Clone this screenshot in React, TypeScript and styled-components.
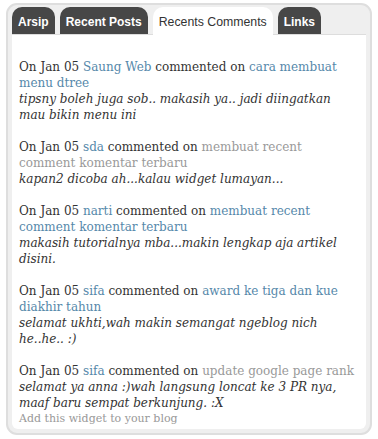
import styled, { createGlobalStyle } from 'styled-components';

const GlobalStyle = createGlobalStyle`
  html, body {
    margin: 0;
    padding: 0;
    background: #ffffff;
  }
`;

const Frame = styled.div`
  box-sizing: border-box;
  margin: 3px 0 0 6px;
  width: 366px;
  height: 432px;
  padding: 2px 4px 4px;
  display: flex;
  flex-direction: column;
  background: #efefef;
  border: 2px solid #dedede;
  border-radius: 11px;
`;

const TabRow = styled.div`
  display: flex;
  gap: 5px;
  align-items: flex-end;
`;

const Tab = styled.div<{ $active?: boolean }>`
  padding: 7px 6px 4px;
  line-height: 16px;
  font-family: "Liberation Sans", Arial, sans-serif;
  font-size: ${(p) => (p.$active ? '12.3px' : '12px')};
  font-weight: ${(p) => (p.$active ? 'normal' : 'bold')};
  color: ${(p) => (p.$active ? '#333333' : '#ffffff')};
  background: ${(p) => (p.$active ? '#ffffff' : '#474747')};
  border-radius: 10px 10px 0 0;
  white-space: nowrap;
  position: relative;
  z-index: ${(p) => (p.$active ? 1 : 0)};
  margin-bottom: ${(p) => (p.$active ? '-1px' : '0')};
  padding-bottom: ${(p) => (p.$active ? '5px' : '4px')};
`;

const Panel = styled.div`
  flex: 1;
  background: #ffffff;
  border-top: 1px solid #dddddd;
  border-radius: 0 0 6px 6px;
  padding: 24px 7px 0;
  font-family: "DejaVu Serif", Georgia, serif;
  font-size: 12px;
  line-height: 16px;
  color: #333333;
`;

const CommentList = styled.ul`
  list-style: none;
  margin: 0;
  padding: 0;
`;

const CommentItem = styled.li`
  margin-bottom: 16px;

  &:last-child {
    margin-bottom: 0;
  }
`;

const Link = styled.a<{ $visited?: boolean }>`
  color: ${(p) => (p.$visited ? '#999999' : '#5588aa')};
  text-decoration: none;
`;

const Body = styled.div`
  font-style: italic;
`;

const Footer = styled.a`
  display: block;
  font-size: 11px;
  color: #999999;
  text-decoration: none;
`;

interface CommentType {
  author: string;
  post: string;
  visited: boolean;
  text: string;
}

const comments: CommentType[] = [
  { author: 'Saung Web', post: 'cara membuat menu dtree', visited: false, text: 'tipsny boleh juga sob.. makasih ya.. jadi diingatkan mau bikin menu ini' },
  { author: 'sda', post: 'membuat recent comment komentar terbaru', visited: true, text: 'kapan2 dicoba ah...kalau widget lumayan...' },
  { author: 'narti', post: 'membuat recent comment komentar terbaru', visited: false, text: 'makasih tutorialnya mba...makin lengkap aja artikel disini.' },
  { author: 'sifa', post: 'award ke tiga dan kue diakhir tahun', visited: false, text: 'selamat ukhti,wah makin semangat ngeblog nich he..he.. :)' },
  { author: 'sifa', post: 'update google page rank', visited: true, text: 'selamat ya anna :)wah langsung loncat ke 3 PR nya, maaf baru sempat berkunjung. :X' },
];

const tabs = ['Arsip', 'Recent Posts', 'Recents Comments', 'Links'];

const App = () => (
  <>
    <GlobalStyle />
    <Frame>
      <TabRow>
        {tabs.map((t) => (
          <Tab key={t} $active={t === 'Recents Comments'}>{t}</Tab>
        ))}
      </TabRow>
      <Panel>
        <CommentList>
          {comments.map((c, i) => (
            <CommentItem key={i}>
              On Jan 05 <Link href='#'>{c.author}</Link> commented on{' '}
              <Link href='#' $visited={c.visited}>{c.post}</Link>
              <Body>{c.text}</Body>
            </CommentItem>
          ))}
        </CommentList>
        <Footer href='#'>Add this widget to your blog</Footer>
      </Panel>
    </Frame>
  </>
);

export default App;
